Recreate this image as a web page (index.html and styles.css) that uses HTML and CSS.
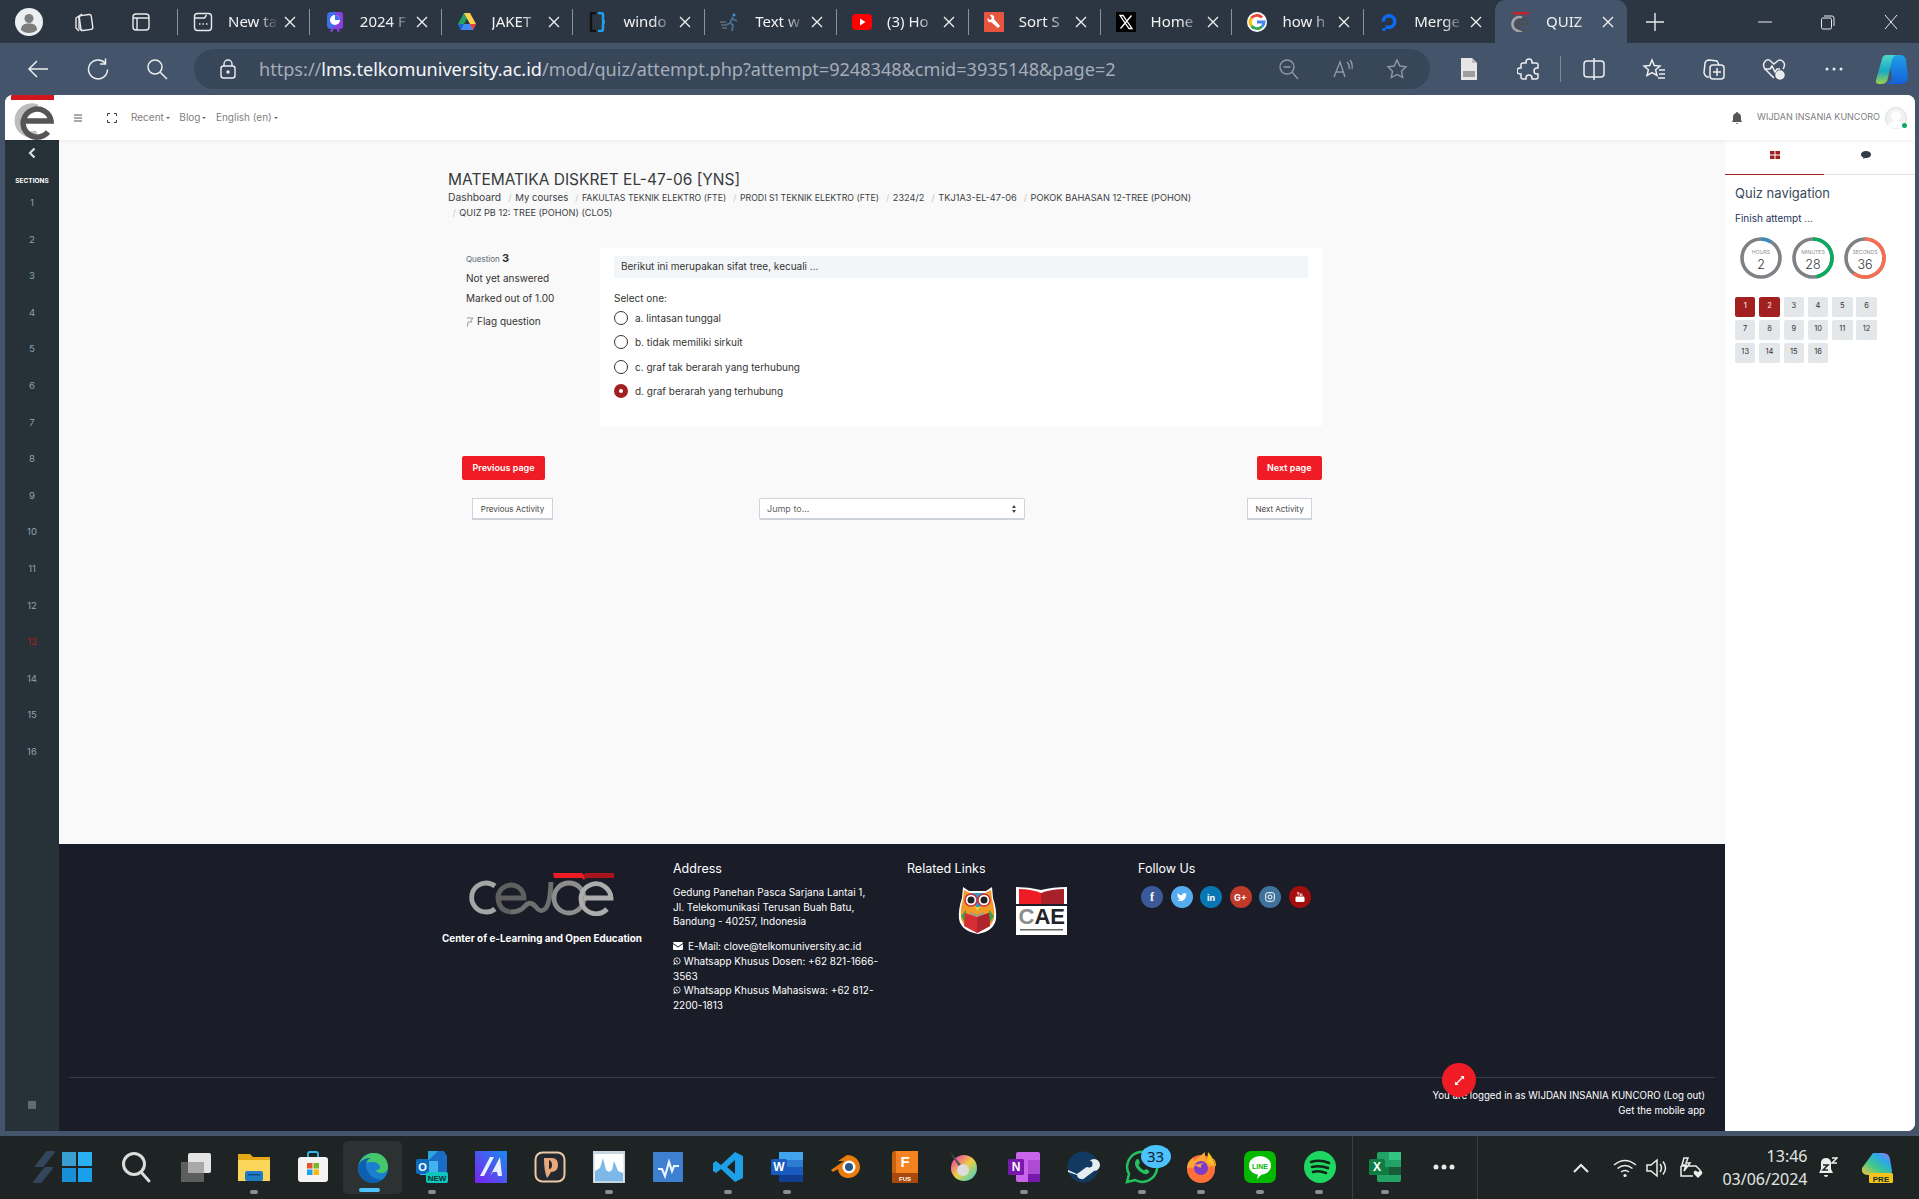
FILE: index.html
```html
<!DOCTYPE html>
<html lang="en">
<head>
    <meta charset="UTF-8">
    <title>QUIZ PB 12: TREE (POHON) (CLO5)</title>
    <link rel="stylesheet" href="styles.css">
</head>
<body>
<div class="browser">

    <!-- tab strip -->
    <div class="strip">
        <div class="strip-left">
            <svg class="avatar-edge" viewBox="0 0 28 28"><circle cx="14" cy="14" r="14" fill="#eceff1"/><circle cx="14" cy="10.5" r="4.5" fill="#7d7d7d"/><path d="M6 22c0-5 3-6.500 8-6.500s8 1.500 8 6.500c-2 2-5 3-8 3s-6-1-8-3z" fill="#7d7d7d"/></svg>
            <svg class="chrome-ico first" viewBox="0 0 22 22"><g class="ln"><rect x="7" y="4" width="12" height="15" rx="2" transform="rotate(-8 13 11)"/><path d="M6 5 3 7v10l3 3M9 3 6 5v12l3 3"/></g></svg>
            <svg class="chrome-ico second" viewBox="0 0 22 22"><g class="ln"><rect x="3" y="3" width="16" height="16" rx="3"/><path d="M7 7v12M3 7h16"/></g></svg>
        </div>
        <div class="tab"><svg class="fav" viewBox="0 0 20 20"><g class="ln"><rect x="1.500" y="1.500" width="17" height="17" rx="3"/><path d="M1.500 6h10l2-3"/></g><path d="M6 12h1.500M9.500 12H11M13 12h1.500" class="ln"/></svg><span class="tab-title">New ta</span><svg class="x" viewBox="0 0 12 12"><path d="M1 1l10 10M11 1 1 11"/></svg></div>
        <div class="tab"><svg class="fav" viewBox="0 0 20 20"><rect x="2" y="0" width="16" height="17" rx="4" fill="#3f6fe8"/><rect x="10" y="0" width="8" height="17" rx="3" fill="#8a3fe0"/><circle cx="10" cy="8" r="5" fill="#fff"/><path d="M10 8V3a5 5 0 0 1 5 5z" fill="#3f6fe8"/><path d="M6 20l2-4h4l2 4" fill="none" stroke="#8a3fe0" stroke-width="2"/></svg><span class="tab-title">2024 F</span><svg class="x" viewBox="0 0 12 12"><path d="M1 1l10 10M11 1 1 11"/></svg></div>
        <div class="tab"><svg class="fav" viewBox="0 0 20 20"><path d="M7 1h6l-6 11H1z" fill="#1fa463"/><path d="M7 1h6l6 11h-6z" fill="#ffd04b"/><path d="M1 12h18l-3 6H4z" fill="#4688f4"/><path d="M1 12h6l-3 6z" fill="#1967d2"/><path d="M13 12h6l-3 6z" fill="#e94235"/></svg><span class="tab-title">JAKET</span><svg class="x" viewBox="0 0 12 12"><path d="M1 1l10 10M11 1 1 11"/></svg></div>
        <div class="tab"><svg class="fav" viewBox="0 0 20 20"><path d="M8 1H3v18h5" fill="none" stroke="#111" stroke-width="2.500"/><path d="M10 1h3q2 0 2 2v5q0 2 2 2-2 0-2 2v5q0 2-2 2h-3" fill="none" stroke="#1ea1e8" stroke-width="2.500"/></svg><span class="tab-title">windo</span><svg class="x" viewBox="0 0 12 12"><path d="M1 1l10 10M11 1 1 11"/></svg></div>
        <div class="tab"><svg class="fav" viewBox="0 0 20 20"><circle cx="14" cy="3" r="1.500" fill="#4a90d9"/><path d="M13 5l-3 6 3 2-1 6M10 11l-4 2M13 7l4 2" fill="none" stroke="#4a6f96" stroke-width="1.800"/><path d="M0 10h6M1 13h5M2 16h5" stroke="#7b8794" stroke-width="1"/></svg><span class="tab-title">Text w</span><svg class="x" viewBox="0 0 12 12"><path d="M1 1l10 10M11 1 1 11"/></svg></div>
        <div class="tab"><svg class="fav" viewBox="0 0 20 20"><rect x="0" y="2" width="20" height="16" rx="4" fill="#f00"/><path d="M8 6.500l5.500 3.500L8 13.500z" fill="#fff"/></svg><span class="tab-title">(3) Ho</span><svg class="x" viewBox="0 0 12 12"><path d="M1 1l10 10M11 1 1 11"/></svg></div>
        <div class="tab"><svg class="fav" viewBox="0 0 20 20"><rect width="20" height="20" rx="1" fill="#e8553f"/><path d="M6 3c3-1 5 2 4 4l6 7-2 2-7-6C5 11 3 9 3.500 6L6 8l2-1.500z" fill="#fff"/></svg><span class="tab-title">Sort S</span><svg class="x" viewBox="0 0 12 12"><path d="M1 1l10 10M11 1 1 11"/></svg></div>
        <div class="tab"><svg class="fav" viewBox="0 0 20 20"><rect width="20" height="20" fill="#000"/><path d="M4 3.500h3l9 13h-3zM15.500 3.500 4.500 16.500" fill="none" stroke="#fff" stroke-width="1.300"/></svg><span class="tab-title">Home</span><svg class="x" viewBox="0 0 12 12"><path d="M1 1l10 10M11 1 1 11"/></svg></div>
        <div class="tab"><svg class="fav" viewBox="0 0 20 20"><circle cx="10" cy="10" r="10" fill="#fff"/><g fill="none" stroke-width="3"><path d="M15 5.500A7 7 0 0 0 4.500 6" stroke="#ea4335"/><path d="M4.500 6a7 7 0 0 0 0 8" stroke="#fbbc05"/><path d="M4.500 14a7 7 0 0 0 10.500.500" stroke="#34a853"/><path d="M15 14.500A7 7 0 0 0 17 10h-7" stroke="#4285f4"/></g></svg><span class="tab-title">how h</span><svg class="x" viewBox="0 0 12 12"><path d="M1 1l10 10M11 1 1 11"/></svg></div>
        <div class="tab"><svg class="fav" viewBox="0 0 20 20"><path d="M10 17a7.500 7.500 0 1 0-7.500-7.500H6a4 4 0 1 1 4 4z" fill="#0a6cf5"/><path d="M6.500 13.500H10V17H6.500zM3.500 16H6.500v3H3.500z" fill="#0a6cf5"/></svg><span class="tab-title">Merge</span><svg class="x" viewBox="0 0 12 12"><path d="M1 1l10 10M11 1 1 11"/></svg></div>
        <div class="tab active"><svg class="fav" viewBox="0 0 20 20"><rect x="2" y="0" width="16" height="2.500" fill="#c8202a"/><path d="M11 5.500a7 7 0 1 0 0 13" fill="none" stroke="#a5a5a5" stroke-width="2.500"/><path d="M6 12h11a5.500 5.500 0 1 0-2 5" fill="none" stroke="#4e4e4e" stroke-width="1.800"/></svg><span class="tab-title">QUIZ</span><svg class="x" viewBox="0 0 12 12"><path d="M1 1l10 10M11 1 1 11"/></svg></div>
        <svg class="plus" viewBox="0 0 20 20"><path d="M10 1v18M1 10h18"/></svg>
        <div class="win-btns">
            <div class="win-btn"><svg viewBox="0 0 14 14"><path d="M0 7h14"/></svg></div>
            <div class="win-btn"><svg viewBox="0 0 14 14"><rect x="0.500" y="3" width="10" height="11" rx="1.500"/><path d="M3 1h8q2 0 2 2v8"/></svg></div>
            <div class="win-btn"><svg viewBox="0 0 14 14"><path d="M1 0l12 14M13 0 1 14"/></svg></div>
        </div>
    </div>

    <!-- address bar row -->
    <div class="toolbar">
        <svg class="tool-ico back" viewBox="0 0 24 24"><path d="M22 12H3M11 4l-8 8 8 8"/></svg>
        <svg class="tool-ico" viewBox="0 0 24 24"><path d="M19 6a9.500 9.500 0 1 0 2.500 6.500M19.500 1.500V7H14"/></svg>
        <svg class="tool-ico" viewBox="0 0 24 24"><circle cx="10" cy="10" r="7"/><path d="M15 15l7 7"/></svg>
        <div class="addr">
            <svg class="lock" viewBox="0 0 18 20"><rect x="2" y="7" width="14" height="12" rx="2.500"/><path d="M5 7V5a4 4 0 0 1 8 0v2"/><circle cx="9" cy="13" r="1"/></svg>
            <span class="url">https://<b>lms.telkomuniversity.ac.id</b>/mod/quiz/attempt.php?attempt=9248348&amp;cmid=3935148&amp;page=2</span>
            <svg class="addr-ico" viewBox="0 0 22 22"><circle cx="9" cy="9" r="7"/><path d="M5.500 9h7M14 14l6 7"/></svg>
            <svg class="addr-ico" viewBox="0 0 22 22"><path d="M2 19 8 4l5 15M4 14h7M15 4q3 3 2 7M18 2q3 4 2 9"/></svg>
            <svg class="addr-ico" viewBox="0 0 22 22"><path d="M11 2l2.800 6 6.200.800-4.500 4.400 1.200 6.300L11 16.500 5.300 19.500l1.200-6.300L2 8.800 8.200 8z"/></svg>
        </div>
        <svg class="tool-ico fill-doc" viewBox="0 0 24 24"><path d="M4 1h11l5 5v17H4z" fill="#e6e6e6"/><path d="M15 1v5h5z" fill="#bdbdbd"/><rect x="6" y="14" width="12" height="6" fill="#9e9e9e"/></svg>
        <svg class="tool-ico ext" viewBox="0 0 24 24"><path d="M9 5q0-3 3-3t3 3v1h4q2 0 2 2v3h-1a3 3 0 0 0 0 6h1v3q0 2-2 2h-4v-1a3 3 0 0 0-6 0v1H6q-2 0-2-2v-3H3a3 3 0 0 1 0-6h1V8q0-2 2-2h3z"/></svg>
        <span class="tool-sep"></span>
        <svg class="tool-ico split" viewBox="0 0 24 24"><rect x="2" y="4" width="20" height="16" rx="3"/><path d="M12 1v22"/></svg>
        <svg class="tool-ico" viewBox="0 0 24 24"><path d="M10 3l2.300 5.500 5.700.500-4.400 3.800 1.400 5.700-5-3-5 3 1.400-5.700L2 9l5.700-.500zM17 13h6M17 17h6M16 21h7"/></svg>
        <svg class="tool-ico" viewBox="0 0 24 24"><path d="M7 20l-2 0q-2-1-3-4L3 6q1-3 4-3l8 1 2 4"/><rect x="8" y="8" width="14" height="14" rx="3"/><path d="M15 11v8M11 15h8"/></svg>
        <svg class="tool-ico" viewBox="0 0 24 24"><path d="M12 21 3 12Q0 8 3 4.500t6 0L12 7l3-2.500q3-3 6 0t0 7.500M2 12h6l2-3 3 6 2-3h3"/><circle cx="18" cy="18" r="4" fill="#e8eaed"/></svg>
        <svg class="tool-ico dots" viewBox="0 0 24 24"><circle cx="5" cy="12" r="1.500"/><circle cx="12" cy="12" r="1.500"/><circle cx="19" cy="12" r="1.500"/></svg>
        <svg class="tool-ico copilot" viewBox="0 0 34 30"><defs><linearGradient id="gp1" x1="0" y1="0" x2="0" y2="1"><stop offset="0" stop-color="#4fd8c8"/><stop offset=".55" stop-color="#19a9c4"/><stop offset="1" stop-color="#9ad24a"/></linearGradient><linearGradient id="gp2" x1="0" y1="0" x2="0" y2="1"><stop offset="0" stop-color="#1fa0e6"/><stop offset="1" stop-color="#1560d8"/></linearGradient></defs><path d="M14 6q1-5 6-5h5q5 0 6 5l2 17q0 6-6 7H10q6-1 7-7z" fill="url(#gp2)"/><path d="M11 1h12q-5 0-6 5l-4 18q-1 6-7 6H4q-4 0-3-4L7 5q1-4 4-4z" fill="url(#gp1)"/></svg>
    </div>

    <!-- the moodle page -->
    <div class="page">
        <header class="topbar">
            <div class="brand">
                <svg class="brand-logo" viewBox="0 0 44 45"><rect x="1" y="0" width="43" height="5" fill="#d3151e"/><path d="M27 12.500a14 14 0 1 0 0 26" fill="none" stroke="#bdbdbd" stroke-width="6.500"/><path d="M16 26h25A14 14 0 1 0 38 37" fill="none" stroke="#555" stroke-width="5.500"/></svg>
            </div>
            <svg class="top-burger" viewBox="0 0 10 8"><path d="M1 1h8M1 4h8M1 7h8"/></svg>
            <svg class="top-full" viewBox="0 0 10 10"><path d="M0.500 3V.500H3M7 .500h2.500V3M9.500 7v2.500H7M3 9.500H.500V7"/></svg>
            <nav class="topnav">
                <a class="caret">Recent</a>
                <a class="caret">Blog</a>
                <a class="caret">English ‎(en)‎</a>
            </nav>
            <div class="userbox">
                <svg class="bell" viewBox="0 0 10 12"><path d="M5 0q1 0 1 1 3 1 3 4v3l1 2H0l1-2V5q0-3 3-4 0-1 1-1zM4 11h2q0 1-1 1t-1-1z"/></svg>
                <span class="username">WIJDAN INSANIA KUNCORO</span>
                <span class="useravatar">
                    <svg viewBox="0 0 22 22"><circle cx="11" cy="11" r="10.500" fill="#f1f1f1" stroke="#ddd"/><circle cx="11" cy="9" r="5" fill="#fff"/><path d="M3 18q3-4 8-4t8 4q-3 3.500-8 3.500T3 18z" fill="#fff"/></svg>
                    <i class="online"></i>
                </span>
            </div>
        </header>

        <div class="page-body">
            <aside class="sections">
                <svg class="sec-back" viewBox="0 0 8 12"><path d="M6.500 1.500 2 6l4.500 4.500"/></svg>
                <div class="sec-title">SECTIONS</div>
                <ol class="sec-list">
                    <li>1</li><li>2</li><li>3</li><li>4</li><li>5</li><li>6</li><li>7</li><li>8</li>
                    <li>9</li><li>10</li><li>11</li><li>12</li><li class="current">13</li><li>14</li><li>15</li><li>16</li>
                </ol>
                <div class="sec-foot"><i></i></div>
            </aside>

            <main class="main">
                <div class="content">
                    <h1 class="course-title">MATEMATIKA DISKRET EL-47-06 [YNS]</h1>
                    <ol class="crumbs">
                        <li class="dash">Dashboard</li>
                        <li class="word">My courses</li>
                        <li class="narrow">FAKULTAS TEKNIK ELEKTRO (FTE)</li>
                        <li class="narrow">PRODI S1 TEKNIK ELEKTRO (FTE)</li>
                        <li>2324/2</li>
                        <li>TKJ1A3-EL-47-06</li>
                        <li>POKOK BAHASAN 12-TREE (POHON)</li>
                        <li>QUIZ PB 12: TREE (POHON) (CLO5)</li>
                    </ol>

                    <section class="question">
                        <div class="q-info">
                            <div class="q-no">Question <b>3</b></div>
                            <div>Not yet answered</div>
                            <div>Marked out of 1.00</div>
                            <div class="q-flag"><svg viewBox="0 0 8 10"><path d="M1 1h6L5 3.500 6 5H2l-.500 4.500"/></svg>Flag question</div>
                        </div>
                        <div class="q-card">
                            <div class="q-text">Berikut ini merupakan sifat tree, kecuali ...</div>
                            <div class="q-select">Select one:</div>
                            <div class="opt"><span class="radio"></span>a. lintasan tunggal</div>
                            <div class="opt"><span class="radio"></span>b. tidak memiliki sirkuit</div>
                            <div class="opt"><span class="radio"></span>c. graf tak berarah yang terhubung</div>
                            <div class="opt"><span class="radio on"></span>d. graf berarah yang terhubung</div>
                        </div>
                    </section>

                    <div class="page-btns">
                        <a class="btn-red">Previous page</a>
                        <a class="btn-red">Next page</a>
                    </div>
                    <div class="activity-nav">
                        <a class="btn-line">Previous Activity</a>
                        <div class="jump"><span>Jump to...</span><i class="updown"></i></div>
                        <a class="btn-line right">Next Activity</a>
                    </div>
                </div>

                <footer class="footer">
                    <div class="foot-cols">
                        <div class="foot-brand">
                            <svg class="celoe" viewBox="0 0 148 44">
                                <path d="M87 1h29l2 2 2-2h28v5h-28l-2 2-2-2H88z" fill="#ee1c25"/>
                                <path d="M118 3l2-2h28v5h-28l-2 2z" fill="#a8141c"/>
                                <g fill="none" stroke-width="4.800">
                                    <path d="M29 14A14.500 14.500 0 1 0 29 37" stroke="#a6a6a6"/>
                                    <path d="M32 26A13 13 0 1 1 58 26H32Q33 39 45 40" stroke="#5f5f5f"/>
                                    <path d="M45 40q9 0 14-6t11 1q4 6 9 2t6-27" stroke="#6f6f6f"/>
                                    <circle cx="103" cy="26" r="15" stroke="#8e8e8e"/>
                                    <path d="M118 26h27A15 15 0 1 0 141 37" stroke="#adadad"/>
                                </g>
                            </svg>
                            <div class="foot-slogan">Center of e-Learning and Open Education</div>
                        </div>
                        <div class="foot-addr">
                            <h4>Address</h4>
                            <p>Gedung Panehan Pasca Sarjana Lantai 1,<br>Jl. Telekomunikasi Terusan Buah Batu,<br>Bandung - 40257, Indonesia</p>
                            <p class="contact">
                                <svg class="mail" viewBox="0 0 10 8"><rect width="10" height="8" rx="1" fill="#fff"/><path d="M0 1.500 5 5l5-3.500" fill="none" stroke="#1a1d28" stroke-width="1"/></svg><span class="mail-line">E-Mail: clove@telkomuniversity.ac.id</span><br>
                                <svg class="wa" viewBox="0 0 10 10"><circle cx="5" cy="5" r="4" fill="none" stroke="#fff"/><path d="M1 9.500 2 7l1 1.500zM3.500 3.500q0 3 3 3" stroke="#fff" fill="#fff" stroke-width="0.700"/></svg> Whatsapp Khusus Dosen: +62 821-1666-3563<br>
                                <svg class="wa" viewBox="0 0 10 10"><circle cx="5" cy="5" r="4" fill="none" stroke="#fff"/><path d="M1 9.500 2 7l1 1.500zM3.500 3.500q0 3 3 3" stroke="#fff" fill="#fff" stroke-width="0.700"/></svg> Whatsapp Khusus Mahasiswa: +62 812-2200-1813
                            </p>
                        </div>
                        <div class="foot-links">
                            <h4>Related Links</h4>
                            <div class="link-logos">
                                <svg class="owl" viewBox="0 0 39 49">
                                    <path d="M5 1l6 4h17l6-4 1 11q4 12 3 21-2 12-18 15Q3 45 1 33q-1-9 3-21z" fill="#fff"/>
                                    <path d="M6 4l6 3h15l6-3 1 9q3 10 2 19-2 10-16 13Q5 42 3 32q-1-9 2-19z" fill="#f19a26"/>
                                    <path d="M12 7h15l-7 18z" fill="#2e9bc9"/>
                                    <path d="M3 30l5-6v14zM36 30l-5-6v14z" fill="#3ba24c"/>
                                    <circle cx="13" cy="14" r="6" fill="#fff" stroke="#c8303a" stroke-width="1.500"/><circle cx="26" cy="14" r="6" fill="#fff" stroke="#c8303a" stroke-width="1.500"/>
                                    <circle cx="13" cy="14" r="3.500" fill="#222"/><circle cx="26" cy="14" r="3.500" fill="#222"/>
                                    <path d="M17 21h5l-2.500 4z" fill="#e8dc3a"/>
                                    <path d="M7 27l12 4 12-4 1 13-13 7-13-7z" fill="#d52f35"/><path d="M19 31l12-4 1 13-13 7z" fill="#b0252c"/>
                                    <path d="M12 26l7 3 7-3v2l-7 3-7-3z" fill="#9a9a9a"/>
                                </svg>
                                <svg class="cae" viewBox="0 0 51 49">
                                    <path d="M0 1q13 0 25 3Q37 1 51 1v48H0z" fill="#fff"/>
                                    <path d="M3 3q12 0 22 4v11H3z" fill="#ee1c25"/>
                                    <path d="M25 7q11-4 23-4v15H25z" fill="#a8202a"/>
                                    <rect x="0" y="18" width="51" height="2" fill="#1a1d28"/>
                                    <text x="2.500" y="38" class="cae-text"><tspan class="cae-c">C</tspan>AE</text>
                                    <rect x="4" y="43" width="43" height="1.500" fill="#666"/>
                                </svg>
                            </div>
                        </div>
                        <div class="foot-follow">
                            <h4>Follow Us</h4>
                            <div class="socials">
                                <span class="soc fb">f</span>
                                <span class="soc tw"><svg viewBox="0 0 12 10"><path d="M12 1.200l-1.300.400 1-1.200-1.400.600C9 -.500 6 .500 6.300 3 4 3 2 1.800.900.500 0 2 .700 3.500 1.600 4L.600 3.800c0 1.200 1 2 2 2.300H1.600c.300 1 1.200 1.500 2.200 1.600C2.800 8.500 1.500 9 0 8.800 5 11.500 11 8.800 10.800 2.600z"/></svg></span>
                                <span class="soc li">in</span>
                                <span class="soc gp">G+</span>
                                <span class="soc ig"><svg viewBox="0 0 10 10"><rect x="0.700" y="0.700" width="8.600" height="8.600" rx="2"/><circle cx="5" cy="5" r="2"/></svg></span>
                                <span class="soc yt"><svg viewBox="0 0 10 11"><rect x="0" y="5" width="10" height="6" rx="1.500"/><path d="M2 0l1 2.500V4M4 0 3 2.500M5 1.500v2.500h1V1.500M7 1.500v2.500h1" fill="none" stroke="#fff" stroke-width="0.800"/></svg></span>
                            </div>
                        </div>
                    </div>
                    <div class="foot-bottom">
                        <div>You are logged in as WIJDAN INSANIA KUNCORO (Log out)</div>
                        <div>Get the mobile app</div>
                    </div>
                </footer>
            </main>

            <aside class="panel">
                <div class="panel-tabs">
                    <div class="panel-tab on"><svg viewBox="0 0 10 8"><path d="M0 0h4.500v3.500H0zM5.500 0H10v3.500H5.500zM0 4.500h4.500V8H0zM5.500 4.500H10V8H5.500z"/></svg></div>
                    <div class="panel-tab chat"><svg viewBox="0 0 10 8"><path d="M5 0c3 0 5 1.500 5 3.500S8 7 5 7H4L2 8l.500-1.500C1 6 0 5 0 3.500 0 1.500 2 0 5 0z"/></svg></div>
                </div>
                <div class="panel-inner">
                    <h3 class="panel-head">Quiz navigation</h3>
                    <div class="finish">Finish attempt ...</div>
                    <div class="timers">
                        <div class="timer">
                            <svg viewBox="0 0 42 42"><circle class="t-bg" cx="21" cy="21" r="19"/><circle class="t-val hours" cx="21" cy="21" r="19" pathLength="100" stroke-dasharray="9 100"/></svg>
                            <span class="t-lab">HOURS</span><span class="t-num">2</span>
                        </div>
                        <div class="timer">
                            <svg viewBox="0 0 42 42"><circle class="t-bg" cx="21" cy="21" r="19"/><circle class="t-val minutes" cx="21" cy="21" r="19" pathLength="100" stroke-dasharray="47 100"/></svg>
                            <span class="t-lab">MINUTES</span><span class="t-num">28</span>
                        </div>
                        <div class="timer">
                            <svg viewBox="0 0 42 42"><circle class="t-bg" cx="21" cy="21" r="19"/><circle class="t-val seconds" cx="21" cy="21" r="19" pathLength="100" stroke-dasharray="60 100"/></svg>
                            <span class="t-lab">SECONDS</span><span class="t-num">36</span>
                        </div>
                    </div>
                    <div class="qnav">
                        <a class="done">1</a><a class="done">2</a><a>3</a><a>4</a><a>5</a><a>6</a>
                        <a>7</a><a>8</a><a>9</a><a>10</a><a>11</a><a>12</a>
                        <a>13</a><a>14</a><a>15</a><a>16</a>
                    </div>
                </div>
            </aside>
        </div>

        <div class="fab"><svg viewBox="0 0 12 12"><path d="M7 1h4v4L9.500 3.500 3.500 9.500 5 11H1V7l1.500 1.500 6-6z"/></svg></div>
    </div>

    <!-- windows taskbar -->
    <div class="taskbar">
        <div class="tb-cell"><svg class="tb-ico" viewBox="0 0 32 32"><path d="M-14 1h7L-18 15h-7zM-16 17h7L-20 31h-7z" fill="#33465c" stroke="#33465c" stroke-width="2" stroke-linejoin="round"/><path d="M1 1h14v14H1z" fill="#3a9fd0"/><path d="M17 1h14v14H17z" fill="#2ab0f0"/><path d="M1 17h14v14H1z" fill="#1790d8"/><path d="M17 17h14v14H17z" fill="#1aa0ea"/></svg></div>
        <div class="tb-cell"><svg class="tb-ico" viewBox="0 0 32 32"><circle cx="14" cy="13" r="10.500" fill="none" stroke="#dcdcdc" stroke-width="3"/><path d="M21 21l8 9" stroke="#dcdcdc" stroke-width="3" stroke-linecap="round"/></svg></div>
        <div class="tb-cell"><svg class="tb-ico" viewBox="0 0 32 32"><rect x="2" y="11" width="23" height="20" fill="#5e5e5e"/><rect x="9" y="2" width="23" height="20" rx="2" fill="#e3e3e3"/><rect x="9" y="11" width="16" height="11" fill="#a9a9a9"/></svg></div>
        <div class="tb-cell dot"><svg class="tb-ico" viewBox="0 0 32 32"><path d="M0 3h12l3 3h17v24H0z" fill="#e6a817"/><path d="M0 9h32v21H0z" fill="#fcd65b"/><rect x="7" y="20" width="18" height="10" rx="2" fill="#1f7bc4"/><rect x="10" y="23" width="12" height="1.500" fill="#0e4f86"/></svg></div>
        <div class="tb-cell"><svg class="tb-ico" viewBox="0 0 32 32"><path d="M11 7V3q0-2 2-2h6q2 0 2 2v4" fill="none" stroke="#35b8e8" stroke-width="1.800"/><rect x="1" y="6" width="30" height="25" rx="3" fill="#f3f3f3"/><rect x="10" y="12" width="5.500" height="5.500" fill="#e8502a"/><rect x="16.500" y="12" width="5.500" height="5.500" fill="#7ab52a"/><rect x="10" y="18.500" width="5.500" height="5.500" fill="#1ea0e8"/><rect x="16.500" y="18.500" width="5.500" height="5.500" fill="#f6b90e"/></svg></div>
        <div class="tb-cell edge"><svg class="tb-ico" viewBox="0 0 32 32"><circle cx="16" cy="16" r="15" fill="#1b7fcf"/><path d="M2 12C5 3 13 1 17 1c8 0 14 6 14 14 0 4-3 6-7 6-3 0-5-1-5-3 3 0 4-1 4-3 0-3-4-5-8-5-5 0-10 3-13 2z" fill="#45c86c"/><path d="M2 12c3-5 8-6 12-6-6 2-6 9-3 14s9 9 15 7c-3 3-7 4-10 4C6 31-1 21 2 12z" fill="#0f5fb0"/></svg></div>
        <div class="tb-cell dot"><svg class="tb-ico" viewBox="0 0 32 32"><path d="M12 0h16l3 5v16H12z" fill="#1a6cc4"/><path d="M12 0h10l-10 10z" fill="#2ba4e0"/><path d="M4 10h18v14H4z" fill="#40b4ec"/><rect x="0" y="8" width="13" height="15" rx="2" fill="#0f6cbd"/><text x="6.500" y="20" class="tb-l s11">O</text><rect x="10" y="21" width="22" height="11" rx="2" fill="#0ec6c0"/><text x="21" y="29.500" class="tb-l s8 dark">NEW</text></svg></div>
        <div class="tb-cell"><svg class="tb-ico" viewBox="0 0 32 32"><defs><linearGradient id="gm" x1="0" y1="1" x2="1" y2="0"><stop offset="0" stop-color="#7a22ee"/><stop offset="1" stop-color="#1a8bf0"/></linearGradient></defs><rect width="32" height="32" fill="url(#gm)"/><path d="M5 25 15 6h4L9 25zM15 25 25 6l2 19h-4l-1-4h-4z" fill="#e8f0ff"/></svg></div>
        <div class="tb-cell"><svg class="tb-ico" viewBox="0 0 32 32"><rect x="1.500" y="1.500" width="29" height="29" rx="7" fill="#222730" stroke="#ebc9a6" stroke-width="2"/><path d="M10 7h8q6 0 6 7t-7 7q-2 4-4 6-3-7-3-20z" fill="#e8a87c"/><path d="M15 9q3 1 3 5t-3 4z" fill="#222730"/></svg></div>
        <div class="tb-cell dot"><svg class="tb-ico" viewBox="0 0 32 32"><rect width="32" height="32" fill="#c8d6e0"/><rect x="1.500" y="3" width="29" height="27" fill="#fff"/><path d="M2 30V20l5-3 3-10 3 12 3 2 3-2 2-9 4 10 5 2v8z" fill="#7cb8e8"/></svg></div>
        <div class="tb-cell"><svg class="tb-ico" viewBox="0 0 32 32"><rect x="1" y="1" width="30" height="30" rx="1" fill="#3d7fd0"/><path d="M6 18l4 0 3 7 4-14 3 9 2-5h5" fill="none" stroke="#e8f2ff" stroke-width="2.200"/></svg></div>
        <div class="tb-cell dot"><svg class="tb-ico" viewBox="0 0 32 32"><path d="M23 1l8 4v22l-8 4L9 18l-5 4-3-2V12l3-2 5 4zM23 9l-8 7 8 7z" fill="#1ea0e8" fill-rule="evenodd"/></svg></div>
        <div class="tb-cell dot"><svg class="tb-ico" viewBox="0 0 32 32"><rect x="8" y="1" width="24" height="30" rx="2" fill="#2b7cd3"/><rect x="8" y="1" width="24" height="8" fill="#41a5ee"/><rect x="8" y="16" width="24" height="8" fill="#185abd"/><rect x="8" y="24" width="24" height="7" fill="#103f91"/><rect x="0" y="8" width="16" height="16" rx="1.500" fill="#185abd"/><text x="8" y="20" class="tb-l s12">W</text></svg></div>
        <div class="tb-cell"><svg class="tb-ico" viewBox="0 0 32 32"><path d="M1 19l13-9-6 0 9-6c8 0 13 6 13 12s-5 11-12 11-10-6-10-9l-5 3z" fill="#e87d0d"/><circle cx="19" cy="16" r="6.500" fill="#fff"/><circle cx="19" cy="16" r="4" fill="#265787"/></svg></div>
        <div class="tb-cell"><svg class="tb-ico" viewBox="0 0 32 32"><path d="M3 4q0-4 4-4h22v32H3z" fill="#f58220"/><path d="M3 4q0-4 4-4v26H3z" fill="#c9620f"/><rect x="3" y="22" width="26" height="10" fill="#a9480c"/><text x="16" y="16" class="tb-l s15">F</text><text x="16" y="30" class="tb-l s6">FUS</text></svg></div>
        <div class="tb-cell"><svg class="tb-ico" viewBox="0 0 32 32"><defs><linearGradient id="gk" x1="0" y1="0" x2="1" y2="1"><stop offset="0" stop-color="#f020c0"/><stop offset=".5" stop-color="#f0d040"/><stop offset="1" stop-color="#20d0e0"/></linearGradient></defs><circle cx="16" cy="17" r="13" fill="url(#gk)"/><path d="M2 1l16 18-4 2z" fill="#555"/><circle cx="15" cy="19" r="6" fill="#ddd"/></svg></div>
        <div class="tb-cell dot"><svg class="tb-ico" viewBox="0 0 32 32"><rect x="8" y="1" width="24" height="30" rx="2" fill="#ca64ea"/><rect x="20" y="9" width="12" height="14" fill="#ae4bd5"/><rect x="20" y="23" width="12" height="8" fill="#7719aa"/><rect x="0" y="8" width="16" height="16" rx="1.500" fill="#7719aa"/><text x="8" y="20" class="tb-l s12">N</text></svg></div>
        <div class="tb-cell"><svg class="tb-ico" viewBox="0 0 32 32"><circle cx="16" cy="16" r="15.500" fill="#123a60"/><path d="M1 19l9 4 11-8v-1a6 6 0 1 1 6 6l-8 6a5 5 0 0 1-9-2L1 21z" fill="#e6edf2"/><circle cx="22" cy="13" r="3.500" fill="#123a60"/></svg></div>
        <div class="tb-cell dot"><svg class="tb-ico" viewBox="0 0 32 32"><path d="M1 31l2-8A15 15 0 1 1 9 29z" fill="none" stroke="#22c35e" stroke-width="2.500"/><path d="M10 9q2-2 3 0l1 3-1.500 2q2 4 5.500 5.500l2-1.500 3 1.500q1 2-1 3-3 2-8-2t-5-8q0-2 1-3.500z" fill="#22c35e"/></svg><span class="badge">33</span></div>
        <div class="tb-cell dot"><svg class="tb-ico" viewBox="0 0 32 32"><circle cx="16" cy="18" r="14" fill="#ff7139"/><path d="M2 17Q3 9 8 7l1 3q6-5 11-9-1 5 3 8t7 9q0-8-3-11 4 1 4 8" fill="#ffa436"/><path d="M23 1q6 6 7 15-4-4-8-5z" fill="#ffbd1f"/><circle cx="16" cy="17" r="7" fill="#7a3dc8"/><path d="M9 14l10-2q-4 2-3 5z" fill="#ff9a4d"/></svg></div>
        <div class="tb-cell dot"><svg class="tb-ico" viewBox="0 0 32 32"><rect width="32" height="32" rx="7" fill="#06b700"/><ellipse cx="16" cy="14.500" rx="11" ry="9.500" fill="#fff"/><path d="M14 23h4l-5 5z" fill="#fff"/><text x="16" y="17.500" class="tb-l s7 green">LINE</text></svg></div>
        <div class="tb-cell dot"><svg class="tb-ico" viewBox="0 0 32 32"><circle cx="16" cy="16" r="16" fill="#1ed760"/><path d="M7 11q9-3 18 1M8 16q8-2 16 1M9 21q6-2 13 1" fill="none" stroke="#14231a" stroke-width="2.600" stroke-linecap="round"/></svg></div>
        <span class="tb-sep first"></span>
        <div class="tb-cell dot"><svg class="tb-ico" viewBox="0 0 32 32"><rect x="8" y="1" width="24" height="30" rx="2" fill="#21a366"/><rect x="20" y="1" width="12" height="8" fill="#33c481"/><rect x="8" y="16" width="12" height="8" fill="#107c41"/><rect x="20" y="16" width="12" height="8" fill="#185c37"/><rect x="0" y="8" width="16" height="16" rx="1.500" fill="#107c41"/><text x="8" y="20" class="tb-l s12">X</text></svg></div>
        <div class="tb-cell"><svg class="tb-more" viewBox="0 0 22 6"><circle cx="3" cy="3" r="2.500"/><circle cx="11" cy="3" r="2.500"/><circle cx="19" cy="3" r="2.500"/></svg></div>
        <span class="tb-sep"></span>
        <div class="tray">
            <svg class="tray-ico chev" viewBox="0 0 16 10"><path d="M1 9l7-7 7 7"/></svg>
            <svg class="tray-ico" viewBox="0 0 24 20"><path d="M1 7q11-9 22 0M4.500 10.500q7.500-6 15 0M8 14q4-3 8 0"/><circle class="solid" cx="12" cy="17.500" r="1.600"/></svg>
            <svg class="tray-ico" viewBox="0 0 24 20"><path d="M1 7h4l6-5v16l-6-5H1zM14 6q3 4 0 8M17 3.500q5 6.500 0 13"/></svg>
            <svg class="tray-ico batt" viewBox="0 0 24 22"><path d="M2 9h15l4 4v3M2 9v10h12M5 1 3 8h4l-2 6 6-8H7l2-5z"/><path class="solid" d="M19 21l-4-4q-1-3 1.500-3.500L19 15l2.500-1.500Q24 14 23 17z"/></svg>
            <div class="clock"><div>13:46</div><div>03/06/2024</div></div>
            <svg class="tray-ico bell2" viewBox="0 0 20 22"><path class="solid" d="M8 1q4 0 5 4v7l2 4H1l2-4V5q1-4 5-4zM6 18h4q0 2-2 2t-2-2z"/><path class="dark" d="M5 8h5l-5 5h5"/><path d="M14 1h5l-5 5h5"/></svg>
            <svg class="tray-copilot" viewBox="0 0 32 30"><defs><linearGradient id="gc" x1="0" y1="1" x2="1" y2="0"><stop offset="0" stop-color="#f6c53a"/><stop offset=".4" stop-color="#3fc88a"/><stop offset=".7" stop-color="#2aa8ea"/><stop offset="1" stop-color="#b76be8"/></linearGradient></defs><path d="M12 0h10q6 0 7 6l2 12q0 4-6 4H6q-6-1-5-7z" fill="url(#gc)"/><rect x="8" y="20" width="24" height="10" rx="1.500" fill="#f6c21c"/><text x="20" y="28.500" class="tb-l s8 dark">PRE</text></svg>
        </div>
    </div>
</div>
</body>
</html>
```

FILE: styles.css
```css
* {
    box-sizing: border-box;
}
html, body {
    margin: 0;
    height: 100%;
    overflow: hidden;
}
body {
    font-family: "Inter", "Liberation Sans", sans-serif;
    background-color: #44546b;
}
.browser {
    display: flex;
    flex-direction: column;
    height: 1199px;
    width: 1919px;
}
.ln, .ln * {
    fill: none;
    stroke: #e8eaed;
    stroke-width: 1.4;
}

/* tab strip */
.strip {
    display: flex;
    align-items: center;
    height: 43px;
    flex: none;
    background-color: #2c3643;
    font-family: "Noto Sans", "Open Sans", sans-serif;
    color: #f2f2f2;
}
.strip-left {
    display: flex;
    align-items: center;
    width: 177px;
    flex: none;
    padding-left: 15px;
}
.avatar-edge {
    width: 28px;
    height: 28px;
}
.chrome-ico {
    width: 22px;
    height: 22px;
}
.chrome-ico.first {
    margin-left: 30px;
}
.chrome-ico.second {
    margin-left: 35px;
}
.tab {
    display: flex;
    align-items: center;
    width: 131.8px;
    height: 43px;
    flex: none;
    padding-left: 16px;
    position: relative;
}
.tab::before {
    content: "";
    position: absolute;
    left: 0;
    top: 9px;
    height: 26px;
    width: 1px;
    background-color: #8a93a0;
}
.tab.active::before {
    display: none;
}
.tab.active {
    background-color: #44546b;
    border-radius: 10px 10px 0 0;
}
.fav {
    width: 20px;
    height: 20px;
    flex: none;
}
.tab-title {
    width: 50px;
    margin: 0 0 2px 15px;
    font-size: 15px;
    white-space: nowrap;
    -webkit-mask-image: linear-gradient(to right, #000 60%, transparent 100%);
    mask-image: linear-gradient(to right, #000 60%, transparent 100%);
}
.x {
    width: 12px;
    height: 12px;
    margin-left: 6px;
    flex: none;
    fill: none;
    stroke: #f2f2f2;
    stroke-width: 1.3;
}
.plus {
    width: 20px;
    height: 20px;
    margin-left: 18px;
    fill: none;
    stroke: #e8eaed;
    stroke-width: 1.4;
}
.win-btns {
    display: flex;
    margin-left: auto;
    margin-right: -3px;
}
.win-btn {
    display: flex;
    align-items: center;
    justify-content: center;
    width: 63px;
    height: 43px;
}
.win-btn svg {
    width: 14px;
    height: 14px;
    fill: none;
    stroke: #e8eaed;
    stroke-width: 1;
    overflow: visible;
}

/* address row */
.toolbar {
    display: flex;
    align-items: center;
    height: 52px;
    flex: none;
    padding-left: 26px;
    background-color: #44546b;
}
.tool-ico {
    width: 24px;
    height: 24px;
    flex: none;
    margin-right: 36px;
    fill: none;
    stroke: #eceef0;
    stroke-width: 1.5;
}
.tool-ico:nth-child(2) {
    margin-right: 35px;
}
.tool-ico:nth-child(3) {
    margin-right: 25px;
}
.addr {
    display: flex;
    align-items: center;
    width: 1236px;
    height: 40px;
    flex: none;
    margin-right: 27px;
    padding-left: 25px;
    border-radius: 20px;
    background-color: #38465a;
    font-family: "Noto Sans", "Open Sans", sans-serif;
}
.lock {
    width: 18px;
    height: 20px;
    flex: none;
    fill: none;
    stroke: #eceef0;
    stroke-width: 1.4;
}
.url {
    margin-left: 22px;
    width: 1019px;
    flex: none;
    font-size: 18.100px;
    color: #a5adb8;
    white-space: nowrap;
}
.url b {
    font-weight: 400;
    color: #f5f6f7;
}
.addr-ico {
    width: 22px;
    height: 22px;
    flex: none;
    margin-right: 32px;
    fill: none;
    stroke: #8f99a6;
    stroke-width: 1.4;
}
.fill-doc {
    stroke: none;
}
.tool-ico.ext {
    margin-right: 19px;
}
.tool-sep {
    width: 1px;
    height: 26px;
    flex: none;
    background-color: #7e8a99;
    margin-right: 21px;
}
.tool-ico.dots {
    fill: #eceef0;
    stroke: none;
    margin-right: 29px;
}
.tool-ico.copilot {
    width: 34px;
    height: 30px;
    stroke: none;
    margin-right: 0;
}

/* page frame */
.page {
    flex: 1;
    min-height: 0;
    margin: 0 4px 5px 5px;
    display: flex;
    flex-direction: column;
    position: relative;
    border-radius: 8px 8px 8px 0;
    overflow: hidden;
    background-color: #fff;
}
.topbar {
    display: flex;
    align-items: center;
    height: 45px;
    flex: none;
    background-color: #fff;
    box-shadow: 0 1px 4px rgba(0, 0, 0, 0.08);
    position: relative;
    z-index: 2;
    color: #808080;
    font-size: 10px;
}
.brand {
    width: 54px;
    height: 45px;
    flex: none;
    padding-left: 5px;
}
.brand-logo {
    display: block;
    width: 44px;
    height: 45px;
}
.top-burger {
    width: 10px;
    height: 8px;
    margin-left: 14px;
    fill: none;
    stroke: #555;
    stroke-width: 1;
}
.top-full {
    width: 10px;
    height: 10px;
    margin-left: 24px;
    fill: none;
    stroke: #333;
    stroke-width: 1;
}
.topnav {
    display: flex;
    gap: 9.500px;
    margin: 0 0 2px 14px;
}
.caret::after {
    content: "";
    display: inline-block;
    margin-left: 2px;
    vertical-align: 2px;
    border-top: 2.500px solid #666;
    border-left: 2px solid transparent;
    border-right: 2px solid transparent;
}
.userbox {
    display: flex;
    align-items: center;
    margin-left: auto;
    margin-right: 8px;
}
.bell {
    width: 10px;
    height: 12px;
    fill: #555;
    margin-right: 15px;
}
.username {
    font-size: 9px;
    margin-bottom: 2px;
}
.useravatar {
    position: relative;
    width: 22px;
    height: 22px;
    margin-left: 5px;
}
.useravatar svg {
    display: block;
    width: 22px;
    height: 22px;
}
.online {
    position: absolute;
    right: 0;
    bottom: 1px;
    width: 5px;
    height: 5px;
    border-radius: 50%;
    background-color: #0fa860;
}
.page-body {
    flex: 1;
    min-height: 0;
    display: flex;
}

/* left sections bar */
.sections {
    display: flex;
    flex-direction: column;
    align-items: center;
    width: 54px;
    flex: none;
    background-color: #263238;
    color: #90a4ae;
}
.sec-back {
    width: 8px;
    height: 12px;
    margin-top: 7px;
    fill: none;
    stroke: #cfe0ee;
    stroke-width: 2.200;
}
.sec-title {
    margin-top: 18px;
    font-size: 6.500px;
    font-weight: 700;
    color: #fff;
}
.sec-list {
    list-style: none;
    margin: 11px 0 0;
    padding: 0;
    text-align: center;
    font-size: 9.500px;
}
.sec-list li {
    height: 36.600px;
    line-height: 14px;
}
.sec-list .current {
    color: #b71c1c;
}
.sec-foot {
    margin-top: auto;
    margin-bottom: 22px;
}
.sec-foot i {
    display: block;
    width: 8px;
    height: 8px;
    background-color: #5d6b72;
}

/* centre column */
.main {
    flex: 1;
    min-width: 0;
    display: flex;
    flex-direction: column;
    background-color: #f9f9f9;
}
.content {
    flex: 1;
    padding: 30px 0 0 389px;
    color: #333;
}
.course-title {
    margin: 0;
    width: 874px;
    height: 19px;
    font-size: 15.500px;
    font-weight: 400;
    line-height: 19px;
    color: #373a3c;
}
.crumbs {
    list-style: none;
    width: 755px;
    margin: 1px 0 0;
    padding: 0;
    font-size: 9.200px;
    line-height: 14.500px;
    color: #3a3f44;
}
.crumbs li {
    display: inline-block;
    white-space: nowrap;
}
.crumbs .dash {
    font-size: 10.300px;
}
.crumbs .word {
    font-size: 9.600px;
}
.crumbs .narrow {
    font-size: 8.750px;
}
.crumbs li + li::before {
    content: "/";
    margin: 0 3.500px 0 4.500px;
    color: #c4c8cc;
}
.question {
    display: flex;
    margin-top: 28px;
    font-size: 10px;
}
.q-info {
    width: 152px;
    padding: 3px 0 0 18px;
    flex: none;
}
.q-info > div {
    height: 20px;
    line-height: 14px;
    white-space: nowrap;
}
.q-info > .q-no {
    height: 19.500px;
    font-size: 8px;
    color: #5b6a74;
}
.q-no b {
    font-size: 11px;
    color: #333;
}
.q-flag {
    display: flex;
    align-items: center;
}
.q-flag svg {
    width: 8px;
    height: 10px;
    margin: 3px 3px 0 0;
    fill: none;
    stroke: #9a9a9a;
}
.q-card {
    width: 722px;
    height: 178px;
    padding: 8px 14px;
    background-color: #fff;
}
.q-text {
    height: 22px;
    padding-left: 7px;
    line-height: 21px;
    border-radius: 2px;
    background-color: #f3f6f8;
}
.q-select {
    margin-top: 13px;
    height: 14px;
    line-height: 14px;
}
.opt {
    display: flex;
    align-items: center;
    height: 24.300px;
    margin-top: 0;
}
.q-select + .opt {
    margin-top: 1px;
}
.radio {
    position: relative;
    width: 14px;
    height: 14px;
    flex: none;
    margin-right: 7px;
    border: 1.500px solid #333;
    border-radius: 50%;
}
.radio.on {
    border: none;
    background-color: #a32020;
}
.radio.on::after {
    content: "";
    position: absolute;
    left: 5px;
    top: 5px;
    width: 4px;
    height: 4px;
    border-radius: 50%;
    background-color: #fff;
}
.page-btns {
    display: flex;
    justify-content: space-between;
    width: 860px;
    margin: 30px 0 0 14px;
}
.btn-red {
    height: 24px;
    padding: 0 10.500px;
    line-height: 24px;
    border-radius: 2px;
    background-color: #ef1c25;
    color: #fff;
    font-size: 9px;
    font-weight: 600;
}
.activity-nav {
    display: grid;
    grid-template-columns: 287px 266px 1fr;
    align-items: center;
    width: 840px;
    margin: 18px 0 0 24px;
}
.btn-line {
    width: 81px;
    height: 22px;
    line-height: 20px;
    text-align: center;
    font-size: 8px;
    color: #444;
    background-color: #fff;
    border: 1px solid #ced2da;
    border-bottom-width: 2px;
}
.btn-line.right {
    justify-self: end;
    width: 65px;
}
.jump {
    display: flex;
    align-items: center;
    justify-content: space-between;
    height: 22px;
    padding: 0 7px;
    font-size: 9px;
    color: #666;
    background-color: #fff;
    border: 1px solid #ced2da;
    border-bottom-width: 2px;
    border-radius: 2px;
}
.updown {
    position: relative;
    width: 5px;
    height: 8px;
}
.updown::before, .updown::after {
    content: "";
    position: absolute;
    left: 0;
    border-left: 2.500px solid transparent;
    border-right: 2.500px solid transparent;
}
.updown::before {
    top: 0;
    border-bottom: 3.500px solid #444;
}
.updown::after {
    bottom: 0;
    border-top: 3.500px solid #444;
}

/* footer */
.footer {
    display: flex;
    flex-direction: column;
    height: 287px;
    flex: none;
    background-color: #1a1d28;
    color: #fff;
    font-size: 10px;
}
.foot-cols {
    display: grid;
    grid-template-columns: 232px 234px 231px 1fr;
    padding: 17px 0 0 382px;
    flex: 1;
}
.foot-brand {
    display: flex;
    flex-direction: column;
    align-items: center;
    width: 202px;
}
.celoe {
    display: block;
    width: 148px;
    height: 44px;
    margin: 11px 4px 0 0;
}
.foot-slogan {
    margin-top: 16px;
    font-size: 9.900px;
    font-weight: 700;
    white-space: nowrap;
}
.footer h4 {
    margin: 0;
    height: 16px;
    font-size: 12.500px;
    font-weight: 400;
    line-height: 16px;
}
.foot-addr {
    width: 208px;
}
.foot-addr p {
    margin: 8px 0 0;
    line-height: 14.700px;
}
.foot-addr .contact {
    margin-top: 10px;
}
.mail {
    width: 10px;
    height: 8px;
    margin-right: 5px;
}
.mail-line {
    white-space: nowrap;
}
.wa {
    width: 8px;
    height: 8px;
}
.link-logos {
    display: flex;
    gap: 19px;
    margin: 9px 0 0 51px;
}
.owl {
    width: 39px;
    height: 49px;
}
.cae {
    width: 51px;
    height: 49px;
}
.cae-text {
    font-family: "Liberation Sans", sans-serif;
    font-size: 22px;
    font-weight: 700;
    fill: #232327;
}
.cae-c {
    fill: #8c8c8c;
}
.socials {
    display: flex;
    gap: 7.500px;
    margin: 9px 0 0 3px;
}
.soc {
    display: flex;
    align-items: center;
    justify-content: center;
    width: 22px;
    height: 22px;
    border-radius: 50%;
    font-size: 9px;
    font-weight: 700;
}
.soc svg {
    width: 10px;
    height: 10px;
    fill: #fff;
}
.fb { background-color: #3b5998; font-family: "Liberation Serif", serif; font-size: 12px; }
.tw { background-color: #55acee; }
.li { background-color: #0976b4; }
.gp { background-color: #c0392b; }
.ig { background-color: #3f729b; }
.ig svg { fill: none; stroke: #fff; stroke-width: 1; }
.yt { background-color: #a50e0e; }
.foot-bottom {
    margin: 0 10px 0 10px;
    padding: 10px 10px 13px 0;
    border-top: 1px solid #3a3d46;
    text-align: right;
    line-height: 15px;
    font-size: 9.700px;
}

/* right panel */
.panel {
    width: 190px;
    flex: none;
    background-color: #fff;
}
.panel-tabs {
    display: flex;
    height: 35px;
    border-bottom: 1px solid #e3e3e3;
}
.panel-tab {
    flex: 1;
    display: flex;
    align-items: center;
    justify-content: center;
    padding-bottom: 5px;
}
.panel-tab svg {
    width: 10px;
    height: 8px;
    fill: #333d47;
}
.panel-tab.on {
    flex: none;
    width: 99px;
    border-bottom: 1px solid #a32020;
    margin-bottom: -1px;
}
.panel-tab.on svg {
    fill: #a32020;
}
.panel-tab.chat {
    padding-right: 7px;
}
.panel-inner {
    padding: 10px 10px 0;
}
.panel-head {
    margin: 0;
    font-size: 13px;
    font-weight: 400;
    line-height: 16px;
    color: #3a4a5a;
}
.finish {
    margin-top: 10px;
    font-size: 10px;
    line-height: 14px;
    color: #1d3557;
}
.timers {
    display: flex;
    gap: 10px;
    margin: 12px 0 0 5px;
}
.timer {
    position: relative;
    display: flex;
    flex-direction: column;
    align-items: center;
    width: 42px;
    height: 42px;
    padding-top: 11.500px;
}
.timer svg {
    position: absolute;
    left: 0;
    top: 0;
    width: 42px;
    height: 42px;
    transform: rotate(-90deg);
    fill: none;
}
.t-bg { stroke: #7f8184; stroke-width: 3.600; }
.t-val { stroke-width: 3.600; }
.hours { stroke: #3d8bbf; }
.minutes { stroke: #0aaa5f; }
.seconds { stroke: #f96e50; }
.t-lab {
    font-size: 5.200px;
    line-height: 7px;
    color: #8b8f93;
}
.t-num {
    margin-top: 2.500px;
    font-size: 12.500px;
    font-weight: 300;
    line-height: 14px;
    color: #333;
}
.qnav {
    display: grid;
    grid-template-columns: repeat(6, 20.400px);
    grid-auto-rows: 20px;
    gap: 3px 3.900px;
    margin-top: 18px;
    font-size: 7.500px;
    color: #333;
}
.qnav a {
    text-align: center;
    line-height: 18px;
    border-radius: 2px;
    background-color: #e3e7ea;
}
.qnav .done {
    background-color: #a32020;
    color: #fff;
}
.fab {
    position: absolute;
    left: 1437px;
    top: 968px;
    display: flex;
    align-items: center;
    justify-content: center;
    width: 34px;
    height: 34px;
    border-radius: 50%;
    background-color: #ef1c25;
}
.fab svg {
    width: 11px;
    height: 11px;
    fill: #fff;
}

/* windows taskbar */
.taskbar {
    display: flex;
    align-items: center;
    height: 63px;
    flex: none;
    padding-left: 47px;
    background-color: #1e2423;
    font-family: "Noto Sans", "Open Sans", sans-serif;
}
.tb-cell {
    position: relative;
    display: flex;
    align-items: center;
    justify-content: center;
    width: 59.200px;
    height: 63px;
    flex: none;
    padding-bottom: 2px;
}
.tb-cell.dot::after {
    content: "";
    position: absolute;
    bottom: 5px;
    left: 25.500px;
    width: 8px;
    height: 4px;
    border-radius: 2px;
    background-color: #8b8f8f;
}
.tb-cell.edge {
    border-radius: 5px;
    background-color: #2c3231;
    height: 53px;
    padding-bottom: 0;
}
.tb-cell.edge::after {
    content: "";
    position: absolute;
    bottom: 2px;
    left: 16px;
    width: 21px;
    height: 4px;
    border-radius: 2px;
    background-color: #4cc2ff;
}
.tb-ico {
    width: 32px;
    height: 32px;
    overflow: visible;
}
.tb-l {
    font-family: "Liberation Sans", sans-serif;
    font-weight: 700;
    fill: #fff;
    text-anchor: middle;
}
.s6 { font-size: 6px; }
.s7 { font-size: 7px; }
.s8 { font-size: 8px; }
.s11 { font-size: 11px; }
.s12 { font-size: 12px; }
.s15 { font-size: 15px; }
.dark { fill: #10302e; }
.green { fill: #06b700; }
.badge {
    position: absolute;
    top: 9px;
    right: 1px;
    width: 30px;
    height: 23px;
    text-align: center;
    line-height: 23px;
    font-size: 15px;
    border-radius: 50%;
    background-color: #4cc2ff;
    color: #10202c;
}
.tb-sep {
    width: 1px;
    height: 63px;
    flex: none;
    background-color: #3a3f40;
    margin: 0 3px;
}
.tb-sep.first {
    margin-left: 3px;
    margin-right: 2px;
}
.tb-more {
    width: 22px;
    height: 6px;
    fill: #e8e8e8;
}
.tray {
    display: flex;
    align-items: center;
    flex: 1;
    padding-left: 92px;
    color: #e2e4e4;
}
.tray-ico {
    width: 24px;
    height: 22px;
    margin-right: 9px;
    fill: none;
    stroke: #eceeee;
    stroke-width: 1.500;
}
.tray-ico .solid {
    fill: #eceeee;
    stroke: none;
}
.tray-ico .dark {
    stroke: #1e2423;
    fill: none;
}
.tray-ico.chev {
    width: 16px;
    height: 10px;
    margin-right: 24px;
    stroke-width: 2;
}
.clock {
    width: 95px;
    margin-left: 1px;
    text-align: right;
    font-size: 16px;
    line-height: 23px;
}
.tray-ico.bell2 {
    width: 20px;
    height: 22px;
    margin: 0 0 0 10px;
}
.tray-copilot {
    width: 32px;
    height: 30px;
    margin-left: 23px;
}
```
